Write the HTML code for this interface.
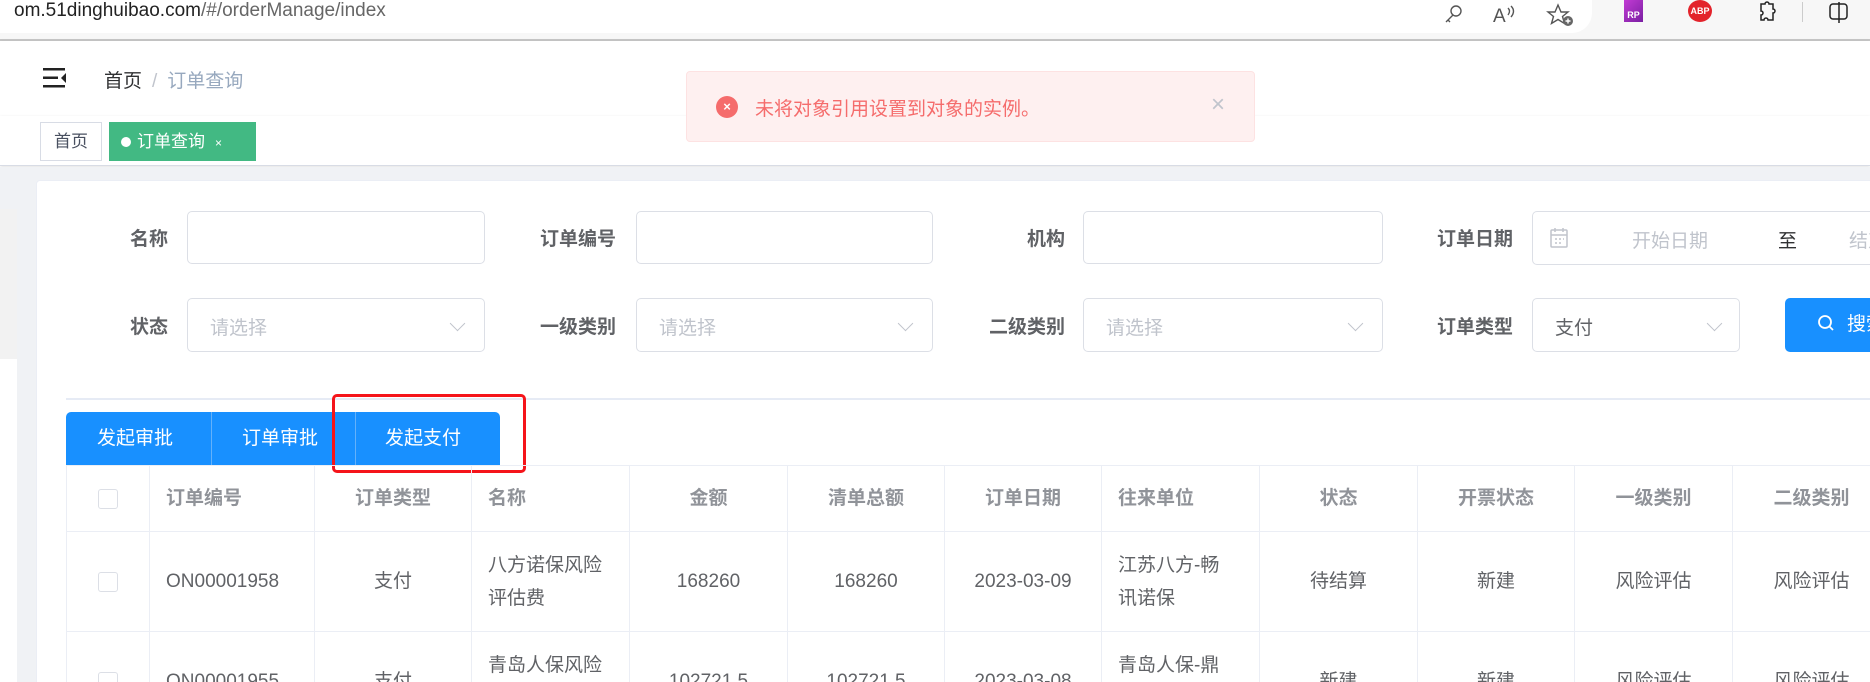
<!DOCTYPE html>
<html style="height:682px;overflow:hidden"><head><meta charset="utf-8"><style>
*{box-sizing:border-box;margin:0;padding:0}
body{width:1870px;height:682px;overflow:hidden;position:relative;background:#fff;font-family:"Liberation Sans","Noto Sans CJK SC",sans-serif;}
.a{position:absolute;white-space:nowrap}
.lbl{position:absolute;font-size:19px;font-weight:bold;color:#606266;text-align:right;width:160px}
.inp{position:absolute;border:1px solid #dcdfe6;border-radius:5px;background:#fff}
.ph{position:absolute;font-size:19px;color:#c0c4cc;white-space:nowrap}
.chev{position:absolute;width:11px;height:11px;border-right:1.5px solid #c0c4cc;border-bottom:1.5px solid #c0c4cc;transform:rotate(45deg)}
table{border-collapse:collapse;position:absolute;left:66px;top:465px;table-layout:fixed;width:1890px}
td,th{border:1px solid #ebeef5;font-size:19px;color:#606266;text-align:center;font-weight:normal;padding:0 16px;line-height:33px}
th{font-weight:bold;color:#909399;height:66px}
td{height:100px}
.l{text-align:left}
.cb{display:inline-block;width:20px;height:20px;border:1px solid #dcdfe6;border-radius:3px;background:#fff;vertical-align:middle}
</style></head><body>
<!-- browser bar -->
<div class="a" style="left:0;top:0;width:1870px;height:39px;background:#f7f7f7"></div>
<div class="a" style="left:0;top:0;width:1592px;height:33px;background:#fff;border-radius:0 0 20px 0"></div>
<div class="a" style="left:14px;top:0;font-size:19px;color:#222;line-height:22px">om.51dinghuibao.com<span style="color:#666">/#/orderManage/index</span></div>
<svg class="a" style="left:1440px;top:2px" width="160" height="26" viewBox="0 0 160 26" fill="none" stroke="#555" stroke-width="1.4">
<circle cx="16" cy="9" r="5"/><path d="M13 13 L6 20 M8 18 l2 2"/>
<text x="53" y="20" font-size="19" fill="#555" stroke="none" font-family="Liberation Sans">A</text><path d="M68 6 q3 3 0 7 M71 4 q5 5 0 11"/>
<path d="M118 3 l3 7 7 0 -5.5 4.5 2 7 -6.5-4 -6.5 4 2-7 -5.5-4.5 7 0z"/>
<circle cx="128" cy="19" r="5" fill="#666" stroke="none"/><path d="M125.5 19h5M128 16.5v5" stroke="#fff"/>
</svg>
<div class="a" style="left:1624px;top:0;width:19px;height:22px;background:linear-gradient(135deg,#c23bd4,#7a1fa2);color:#fff;font-size:9px;font-weight:bold;line-height:30px;text-align:center">RP</div>
<div class="a" style="left:1688px;top:0;width:24px;height:22px;border-radius:50%;background:#e3232b;color:#fff;font-size:9px;font-weight:bold;line-height:22px;text-align:center">ABP</div>
<svg class="a" style="left:1755px;top:0" width="24" height="24" viewBox="0 0 24 24" fill="none" stroke="#222" stroke-width="1.5"><path d="M6 4h4a2 2 0 0 1 4 0h4v5a2 2 0 0 1 0 4v7h-5a2 2 0 0 0-4 0H6v-5a2 2 0 0 0 0-4z"/></svg>
<div class="a" style="left:1802px;top:2px;width:1px;height:20px;background:#ccc"></div>
<svg class="a" style="left:1828px;top:1px" width="22" height="22" viewBox="0 0 22 22" fill="none" stroke="#222" stroke-width="1.5"><rect x="2" y="3" width="17" height="15" rx="3"/><path d="M11 1v21"/></svg>
<div class="a" style="left:0;top:39px;width:1870px;height:2px;background:#c6c6c6"></div>
<!-- header -->
<div class="a" style="left:0;top:41px;width:1870px;height:75px;background:#fff;box-shadow:0 1px 4px rgba(0,21,41,.08)"></div>
<svg class="a" style="left:43px;top:68px" width="24" height="20" viewBox="0 0 24 20" fill="#222"><rect x="0" y="0" width="22" height="2.5"/><rect x="0" y="8.5" width="15" height="2.5"/><rect x="0" y="17" width="22" height="2.5"/><path d="M23 5 L18 10 L23 15z"/></svg>
<div class="a" style="left:104px;top:66px;font-size:19px;color:#303133">首页<span style="color:#c0c4cc;margin:0 10px">/</span><span style="color:#97a8be">订单查询</span></div>
<!-- tags -->
<div class="a" style="left:0;top:116px;width:1870px;height:50px;background:#fff;border-bottom:1px solid #d8dce5;box-shadow:0 1px 3px rgba(0,0,0,.12)"></div>
<div class="a" style="left:40px;top:122px;width:62px;height:39px;border:1px solid #d8dce5;font-size:17px;color:#495060;line-height:37px;text-align:center">首页</div>
<div class="a" style="left:109px;top:122px;width:147px;height:39px;background:#42b983;color:#fff;font-size:17px;line-height:39px;padding-left:12px"><span style="display:inline-block;width:10px;height:10px;border-radius:50%;background:#fff;margin-right:6px"></span>订单查询<span style="font-size:12px;margin-left:10px">×</span></div>
<!-- content bg -->
<div class="a" style="left:0;top:167px;width:1870px;height:515px;background:#f0f2f5"></div>
<div class="a" style="left:0;top:209px;width:17px;height:473px;background:#fff"></div>
<div class="a" style="left:0;top:209px;width:17px;height:150px;background:#f2f2f2"></div>
<div class="a" style="left:36px;top:180px;width:1860px;height:520px;background:#fff;border:1px solid #ebeef5;border-radius:4px"></div>
<!-- form row 1 -->
<div class="lbl" style="left:8px;top:224px">名称</div>
<div class="inp" style="left:187px;top:211px;width:298px;height:53px"></div>
<div class="lbl" style="left:456px;top:224px">订单编号</div>
<div class="inp" style="left:636px;top:211px;width:297px;height:53px"></div>
<div class="lbl" style="left:905px;top:224px">机构</div>
<div class="inp" style="left:1083px;top:211px;width:300px;height:53px"></div>
<div class="lbl" style="left:1353px;top:224px">订单日期</div>
<div class="inp" style="left:1532px;top:211px;width:400px;height:54px"></div>
<svg class="a" style="left:1549px;top:227px" width="20" height="22" viewBox="0 0 20 22" fill="none" stroke="#c0c4cc" stroke-width="1.5"><rect x="2" y="3" width="16" height="17" rx="1"/><path d="M2 8h16M6 1v4M14 1v4M6 12h2M10 12h2M14 12h1M6 16h2M10 16h2"/></svg>
<div class="ph" style="left:1632px;top:226px">开始日期</div>
<div class="a" style="left:1778px;top:226px;font-size:19px;color:#303133">至</div>
<div class="ph" style="left:1849px;top:226px">结束日期</div>
<!-- row 2 -->
<div class="lbl" style="left:8px;top:312px">状态</div>
<div class="inp" style="left:187px;top:298px;width:298px;height:54px"></div>
<div class="ph" style="left:210px;top:313px">请选择</div><div class="chev" style="left:452px;top:318px"></div>
<div class="lbl" style="left:456px;top:312px">一级类别</div>
<div class="inp" style="left:636px;top:298px;width:297px;height:54px"></div>
<div class="ph" style="left:659px;top:313px">请选择</div><div class="chev" style="left:900px;top:318px"></div>
<div class="lbl" style="left:905px;top:312px">二级类别</div>
<div class="inp" style="left:1083px;top:298px;width:300px;height:54px"></div>
<div class="ph" style="left:1106px;top:313px">请选择</div><div class="chev" style="left:1350px;top:318px"></div>
<div class="lbl" style="left:1353px;top:312px">订单类型</div>
<div class="inp" style="left:1532px;top:298px;width:208px;height:54px"></div>
<div class="a" style="left:1555px;top:313px;font-size:19px;color:#606266">支付</div><div class="chev" style="left:1709px;top:318px"></div>
<div class="a" style="left:1785px;top:298px;width:120px;height:54px;background:#1890ff;border-radius:5px;color:#fff;font-size:19px;line-height:54px;padding-left:32px"><svg width="18" height="18" viewBox="0 0 18 18" fill="none" stroke="#fff" stroke-width="1.8" style="vertical-align:-2px;margin-right:12px"><circle cx="8" cy="8" r="6"/><path d="M12.5 12.5L16 16"/></svg>搜索</div>
<!-- divider -->
<div class="a" style="left:66px;top:398px;width:1810px;height:2px;background:#e6ebf5"></div>
<!-- button group -->
<div class="a" style="left:66px;top:412px;width:434px;height:53px;background:#1890ff;border-radius:5px 5px 0 0;color:#fff;font-size:19px;line-height:53px">
<span class="a" style="left:31px">发起审批</span><span class="a" style="left:145px;top:0;width:1px;height:53px;background:#64b1fa"></span>
<span class="a" style="left:176px">订单审批</span><span class="a" style="left:289px;top:0;width:1px;height:53px;background:#64b1fa"></span>
<span class="a" style="left:319px">发起支付</span></div>
<div class="a" style="left:332px;top:394px;width:194px;height:79px;border:3px solid #f5141a;border-radius:5px"></div>
<!-- table -->
<table>
<colgroup><col style="width:83px"><col style="width:165px"><col style="width:157px"><col style="width:158px"><col style="width:158px"><col style="width:157px"><col style="width:157px"><col style="width:158px"><col style="width:158px"><col style="width:157px"><col style="width:158px"><col style="width:158px"><col></colgroup>
<tr><th><span class="cb"></span></th><th class="l">订单编号</th><th>订单类型</th><th class="l">名称</th><th>金额</th><th>清单总额</th><th>订单日期</th><th class="l">往来单位</th><th>状态</th><th>开票状态</th><th>一级类别</th><th>二级类别</th><th></th></tr>
<tr><td><span class="cb"></span></td><td class="l">ON00001958</td><td>支付</td><td class="l">八方诺保风险<br>评估费</td><td>168260</td><td>168260</td><td>2023-03-09</td><td class="l">江苏八方-畅<br>讯诺保</td><td>待结算</td><td>新建</td><td>风险评估</td><td>风险评估</td><td></td></tr>
<tr><td><span class="cb"></span></td><td class="l">ON00001955</td><td>支付</td><td class="l">青岛人保风险<br>评估费</td><td>102721.5</td><td>102721.5</td><td>2023-03-08</td><td class="l">青岛人保-鼎<br>讯诺保</td><td>新建</td><td>新建</td><td>风险评估</td><td>风险评估</td><td></td></tr>
</table>
<!-- toast -->
<div class="a" style="left:686px;top:71px;width:569px;height:71px;background:#fef0f0;border:1px solid #fde2e2;border-radius:4px"></div>
<div class="a" style="left:716px;top:96px;width:22px;height:22px;border-radius:50%;background:#f56c6c;color:#fff;font-size:13px;line-height:22px;text-align:center;font-weight:bold">×</div>
<div class="a" style="left:755px;top:94px;font-size:19px;color:#f56c6c">未将对象引用设置到对象的实例。</div>
<div class="a" style="left:1211px;top:92px;font-size:24px;color:#c0c4cc;line-height:26px">×</div>
</body></html>
